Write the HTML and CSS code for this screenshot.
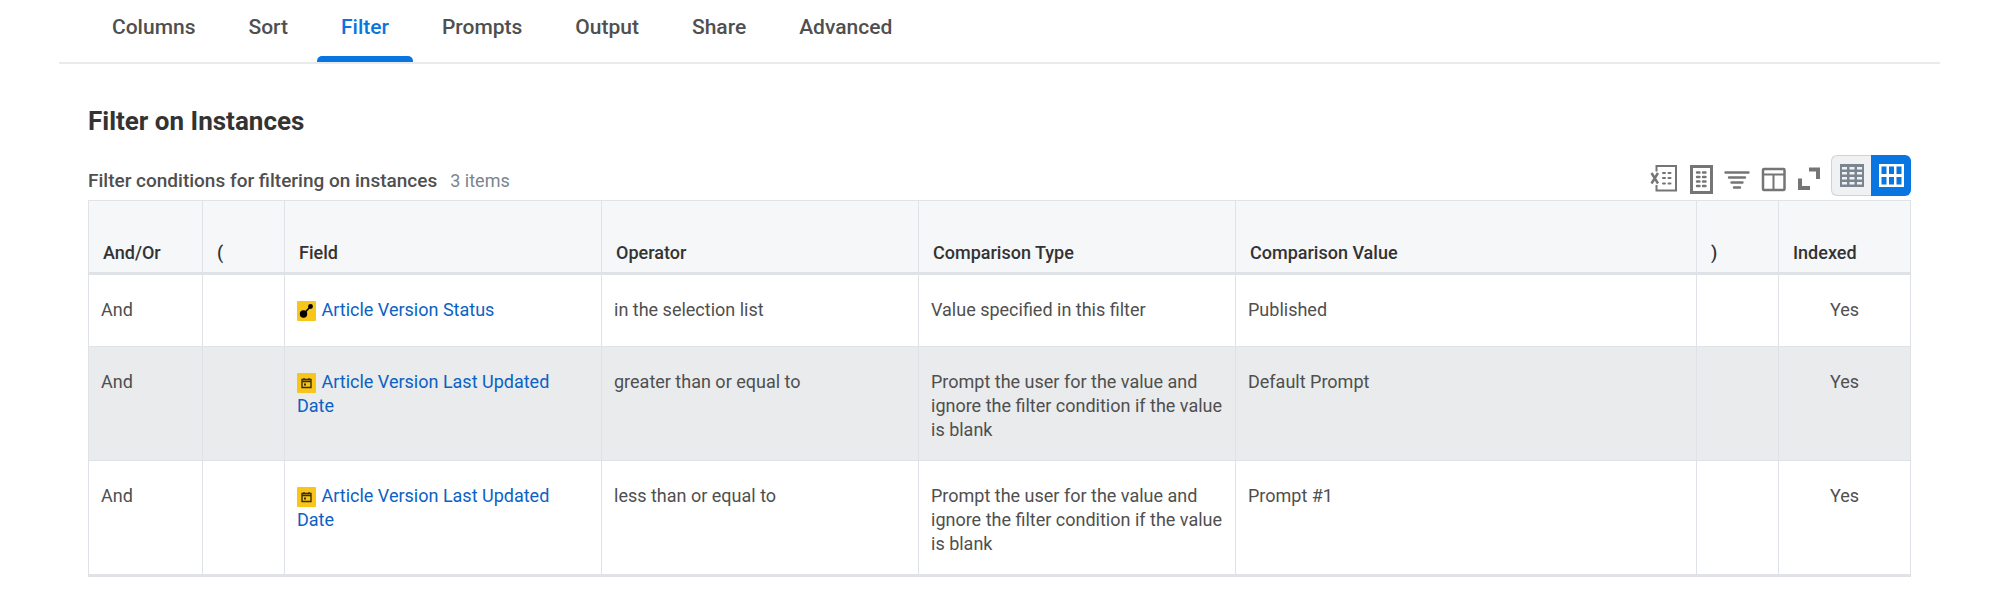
FILE: index.html
```html
<!DOCTYPE html>
<html lang="en">
<head>
    <meta charset="UTF-8">
    <meta name="viewport" content="width=device-width, initial-scale=1.0">
    <title>Filter on Instances</title>
    <link rel="stylesheet" href="styles.css">
</head>
<body>
    <nav class="tabs">
        <a class="tab" href="#">Columns</a>
        <a class="tab" href="#">Sort</a>
        <a class="tab active" href="#">Filter</a>
        <a class="tab" href="#">Prompts</a>
        <a class="tab" href="#">Output</a>
        <a class="tab" href="#">Share</a>
        <a class="tab" href="#">Advanced</a>
    </nav>

    <main class="content">
        <h2 class="title">Filter on Instances</h2>

        <div class="table-bar">
            <div class="caption">
                <span class="caption-text" id="grid-label">Filter conditions for filtering on instances</span>
                <span class="count">3 items</span>
            </div>
            <div class="tools">
                <button class="tool" aria-label="Export to Excel">
                    <svg width="28" height="30" viewBox="0 0 28 30" fill="none" stroke="#757575" stroke-width="2">
                        <path d="M6.500 7.500V2H26v24.500H6.500V21"/>
                        <path d="M1.500 9l6.500 10.500M8 9L1.500 19.500" stroke-width="2.400"/>
                        <path d="M13 9h2M18.500 9h2M13 14h2M18.500 14h2M13 19.500h2M18.500 19.500h2" stroke-linecap="round"/>
                    </svg>
                </button>
                <button class="tool" aria-label="View printable version">
                    <svg width="24" height="30" viewBox="0 0 24 30" fill="none" stroke="#757575">
                        <path d="M2.500 2.500h20v26h-20z" stroke-width="3"/>
                        <path d="M8 8.500h2.500M14 8.500h2.500M8 13h2.500M14 13h2.500M8 17.500h2.500M14 17.500h2.500M8 22h2.500M14 22h2.500" stroke-width="2.400" stroke-linecap="round"/>
                    </svg>
                </button>
                <button class="tool" aria-label="Filter rows">
                    <svg width="26" height="30" viewBox="0 0 26 30" fill="none" stroke="#757575" stroke-width="2.400" stroke-linecap="round">
                        <path d="M1.500 8.500h23M5 13.500h16M7.500 18.500h11M10 23.500h6"/>
                    </svg>
                </button>
                <button class="tool" aria-label="Column preferences">
                    <svg width="25" height="30" viewBox="0 0 25 30" fill="none" stroke="#757575" stroke-width="2">
                        <rect x="2" y="5" width="21.500" height="21" rx="1" stroke-width="2.500"/>
                        <path d="M2 10.500h21M12.500 11v15"/>
                    </svg>
                </button>
                <button class="tool" aria-label="Expand">
                    <svg width="23" height="30" viewBox="0 0 23 30" fill="none" stroke="#757575" stroke-width="4">
                        <path d="M12 5.500h9V15M3 14.500V24h10"/>
                    </svg>
                </button>
                <div class="view-toggle">
                    <button class="view" aria-label="Grid view">
                        <svg width="24" height="23" viewBox="0 0 24 23">
                            <path fill="#7b858f" d="M0 0h24v23H0z"/>
                            <path fill="#f0f1f2" d="M2 3h5v2.500H2zM9.500 3h5v2.500h-5zM17 3h5v2.500h-5zM2 8h5v2.500H2zM9.500 8h5v2.500h-5zM17 8h5v2.500h-5zM2 13h5v2.500H2zM9.500 13h5v2.500h-5zM17 13h5v2.500h-5zM2 18h5v2.500H2zM9.500 18h5v2.500h-5zM17 18h5v2.500h-5z"/>
                        </svg>
                    </button>
                    <button class="view selected" aria-label="Expanded grid view">
                        <svg width="25" height="23" viewBox="0 0 25 23">
                            <path fill="#fff" d="M0 0h25v23H0z"/>
                            <path fill="#0875e1" d="M2.500 2.500h5V10h-5zM10 2.500h5V10h-5zM17.500 2.500h5V10h-5zM2.500 13h5v7.500h-5zM10 13h5v7.500h-5zM17.500 13h5v7.500h-5z"/>
                        </svg>
                    </button>
                </div>
            </div>
        </div>

        <table class="grid" aria-labelledby="grid-label">
            <colgroup>
                <col class="col-andor">
                <col class="col-paren">
                <col class="col-wide">
                <col class="col-wide">
                <col class="col-wide">
                <col>
                <col class="col-paren">
                <col class="col-indexed">
            </colgroup>
            <thead>
                <tr>
                    <th>And/Or</th>
                    <th>(</th>
                    <th>Field</th>
                    <th>Operator</th>
                    <th>Comparison Type</th>
                    <th>Comparison Value</th>
                    <th>)</th>
                    <th>Indexed</th>
                </tr>
            </thead>
            <tbody>
                <tr>
                    <td>And</td>
                    <td></td>
                    <td>
                        <svg class="field-icon" width="19" height="20" viewBox="0 0 19 20">
                            <rect width="19" height="20" rx="1" fill="#f8c51c"/>
                            <path d="M6.500 13l7-7.500" stroke="#000" stroke-width="1.500"/>
                            <circle cx="6.500" cy="13" r="3.700"/>
                            <circle cx="13.500" cy="5.500" r="2.400"/>
                        </svg>
                        <a class="link" href="#">Article Version Status</a>
                    </td>
                    <td>in the selection list</td>
                    <td>Value specified in this filter</td>
                    <td>Published</td>
                    <td></td>
                    <td class="center">Yes</td>
                </tr>
                <tr>
                    <td>And</td>
                    <td></td>
                    <td>
                        <svg class="field-icon" width="19" height="20" viewBox="0 0 19 20">
                            <rect width="19" height="20" rx="1" fill="#f8c51c"/>
                            <path d="M5 6.500h9v8H5zM5 8.500h9M7 5v1.500M12 5v1.500" fill="none" stroke="#3d3000" stroke-width="1.400"/>
                            <path d="M7 10.500h2v2H7z" fill="#3d3000"/>
                        </svg>
                        <a class="link" href="#">Article Version Last Updated Date</a>
                    </td>
                    <td>greater than or equal to</td>
                    <td>Prompt the user for the value and ignore the filter condition if the value is blank</td>
                    <td>Default Prompt</td>
                    <td></td>
                    <td class="center">Yes</td>
                </tr>
                <tr>
                    <td>And</td>
                    <td></td>
                    <td>
                        <svg class="field-icon" width="19" height="20" viewBox="0 0 19 20">
                            <rect width="19" height="20" rx="1" fill="#f8c51c"/>
                            <path d="M5 6.500h9v8H5zM5 8.500h9M7 5v1.500M12 5v1.500" fill="none" stroke="#3d3000" stroke-width="1.400"/>
                            <path d="M7 10.500h2v2H7z" fill="#3d3000"/>
                        </svg>
                        <a class="link" href="#">Article Version Last Updated Date</a>
                    </td>
                    <td>less than or equal to</td>
                    <td>Prompt the user for the value and ignore the filter condition if the value is blank</td>
                    <td>Prompt #1</td>
                    <td></td>
                    <td class="center">Yes</td>
                </tr>
            </tbody>
        </table>
    </main>
</body>
</html>
```
FILE: styles.css
```css
* {
    box-sizing: border-box;
}
body {
    margin: 0;
    background: #fff;
    color: #4f4f4f;
    font-family: Roboto, "Liberation Sans", sans-serif;
    font-size: 18px;
    line-height: 24px;
}
button {
    padding: 0;
    border: none;
    background: none;
    cursor: pointer;
}
svg {
    display: block;
}
.tabs {
    display: flex;
    gap: 5px;
    margin: 0 59px;
    padding-left: 29px;
    border-bottom: 2px solid #e8eaed;
}
.tab {
    padding: 15px 24px 17px;
    border-bottom: 6px solid transparent;
    color: #4f4f4f;
    font-size: 21px;
    font-weight: 500;
    text-decoration: none;
}
.tab.active {
    color: #0875e1;
    position: relative;
}
.tab.active::after {
    content: "";
    position: absolute;
    left: 0;
    right: 0;
    bottom: -6px;
    height: 6px;
    border-radius: 5px 5px 0 0;
    background: #0875e1;
}
.content {
    padding: 40px 88px;
}
.title {
    margin: 0;
    color: #333;
    font-size: 26px;
    font-weight: 700;
    line-height: 34px;
}
.table-bar {
    display: flex;
    justify-content: space-between;
    margin-top: 17px;
    height: 45px;
}
.caption {
    display: flex;
    align-items: baseline;
    gap: 13px;
    padding-top: 14px;
}
.caption-text {
    font-size: 19px;
    font-weight: 500;
}
.count {
    color: #7b858f;
    font-size: 18px;
}
.tools {
    display: flex;
    align-items: flex-start;
    gap: 11px;
}
.tool {
    padding-top: 9px;
}
.view-toggle {
    display: flex;
}
.view {
    display: flex;
    align-items: center;
    justify-content: center;
    width: 40px;
    height: 41px;
    border: 1px solid #ced3d9;
    border-right: none;
    border-radius: 6px 0 0 6px;
    background: #f0f1f2;
}
.view.selected {
    border: none;
    border-radius: 0 6px 6px 0;
    background: #0875e1;
}
.grid {
    width: 100%;
    table-layout: fixed;
    border-collapse: collapse;
    border: 1px solid #dfe2e6;
    border-bottom: 3px solid #dfe2e6;
}
.col-andor {
    width: 114px;
}
.col-paren {
    width: 82px;
}
.col-wide {
    width: 317px;
}
.col-indexed {
    width: 132px;
}
.grid th {
    height: 73px;
    padding: 0 14px 7px;
    border: 1px solid #dfe2e6;
    border-bottom: 3px solid #dfe2e6;
    background: #f6f7f9;
    color: #333;
    font-size: 18px;
    font-weight: 500;
    text-align: left;
    vertical-align: bottom;
}
.grid td {
    height: 73px;
    padding: 23px 12px 18px;
    border: 1px solid #dfe2e6;
    text-align: left;
    vertical-align: top;
}
.grid td.center {
    text-align: center;
}
.grid tbody tr:nth-child(even) {
    background: #e9ebec;
}
.field-icon {
    display: inline-block;
    margin-right: 1px;
    vertical-align: -5px;
}
.link {
    color: #0b62c4;
    text-decoration: none;
}
```
